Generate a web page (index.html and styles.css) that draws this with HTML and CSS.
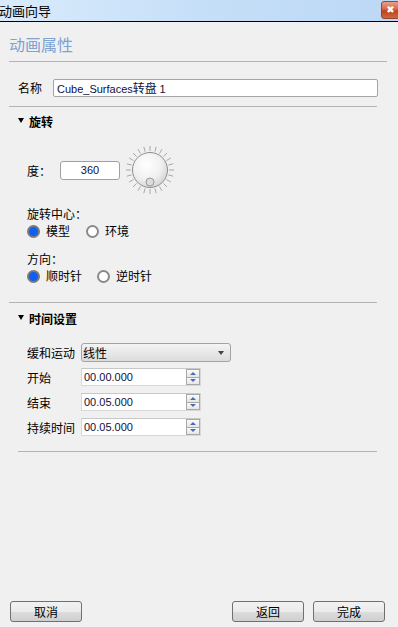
FILE: index.html
```html
<!DOCTYPE html>
<html>
<head>
<meta charset="utf-8">
<link rel="stylesheet" href="styles.css">
</head>
<body>
<div class="window">
  <div class="titlebar">
    <span class="title">动画向导</span>
    <span class="close">✖</span>
  </div>
  <div class="page">
    <div class="heading">动画属性</div>
    <div class="rule rule-wide"></div>

    <div class="name-row">
      <span class="lbl name-lbl">名称</span>
      <div class="textbox name-box"><span class="latin">Cube_Surfaces</span>转盘 <span class="latin">1</span></div>
    </div>
    <div class="rule rule-1"></div>

    <div class="section-title sec-rot"><span class="tri"></span>旋转</div>

    <div class="deg-row">
      <span class="lbl deg-lbl">度：</span>
      <div class="deg-box">360</div>
      <svg class="knob" width="50" height="50" viewBox="0 0 50 50">
        <defs>
          <radialGradient id="kg" cx="0.4" cy="0.35" r="0.7">
            <stop offset="0" stop-color="#ffffff"/>
            <stop offset="0.6" stop-color="#f0f0f0"/>
            <stop offset="1" stop-color="#d2d2d2"/>
          </radialGradient>
        </defs>
        <g stroke="#a8a8a8" stroke-width="1">
          <line x1="25" y1="1" x2="25" y2="6"/>
          <line x1="31.2" y1="1.8" x2="29.9" y2="6.7"/>
          <line x1="37" y1="4.2" x2="34.5" y2="8.5"/>
          <line x1="42" y1="8" x2="38.4" y2="11.6"/>
          <line x1="45.8" y1="13" x2="41.5" y2="15.5"/>
          <line x1="48.2" y1="18.8" x2="43.4" y2="20.1"/>
          <line x1="49" y1="25" x2="44" y2="25"/>
          <line x1="48.2" y1="31.2" x2="43.4" y2="29.9"/>
          <line x1="45.8" y1="37" x2="41.5" y2="34.5"/>
          <line x1="42" y1="42" x2="38.4" y2="38.4"/>
          <line x1="37" y1="45.8" x2="34.5" y2="41.5"/>
          <line x1="31.2" y1="48.2" x2="29.9" y2="43.4"/>
          <line x1="25" y1="49" x2="25" y2="44"/>
          <line x1="18.8" y1="48.2" x2="20.1" y2="43.4"/>
          <line x1="13" y1="45.8" x2="15.5" y2="41.5"/>
          <line x1="8" y1="42" x2="11.6" y2="38.4"/>
          <line x1="4.2" y1="37" x2="8.5" y2="34.5"/>
          <line x1="1.8" y1="31.2" x2="6.7" y2="29.9"/>
          <line x1="1" y1="25" x2="6" y2="25"/>
          <line x1="1.8" y1="18.8" x2="6.7" y2="20.1"/>
          <line x1="4.2" y1="13" x2="8.5" y2="15.5"/>
          <line x1="8" y1="8" x2="11.6" y2="11.6"/>
          <line x1="13" y1="4.2" x2="15.5" y2="8.5"/>
          <line x1="18.8" y1="1.8" x2="20.1" y2="6.7"/>
        </g>
        <circle cx="25" cy="25" r="17.5" fill="url(#kg)" stroke="#8e8e8e" stroke-width="1"/>
        <circle cx="25" cy="37" r="4" fill="#dcdcdc" stroke="#9a9a9a" stroke-width="1"/>
      </svg>
    </div>

    <div class="lbl sub-lbl center-lbl">旋转中心：</div>
    <div class="radio-row">
      <span class="radio checked"></span><span class="rtext">模型</span>
      <span class="radio r-env"></span><span class="rtext">环境</span>
    </div>

    <div class="lbl sub-lbl dir-lbl">方向：</div>
    <div class="radio-row">
      <span class="radio checked"></span><span class="rtext">顺时针</span>
      <span class="radio r-ccw"></span><span class="rtext">逆时针</span>
    </div>

    <div class="rule rule-2"></div>

    <div class="section-title sec-time"><span class="tri"></span>时间设置</div>

    <div class="form-row ease-row">
      <span class="lbl flbl">缓和运动</span>
      <div class="dropdown"><span>线性</span><span class="dd-arrow"></span></div>
    </div>
    <div class="form-row time-row">
      <span class="lbl flbl">开始</span>
      <div class="spinbox"><span class="val">00.00.000</span><span class="spin"><span class="up"></span><span class="down"></span></span></div>
    </div>
    <div class="form-row time-row">
      <span class="lbl flbl">结束</span>
      <div class="spinbox"><span class="val">00.05.000</span><span class="spin"><span class="up"></span><span class="down"></span></span></div>
    </div>
    <div class="form-row time-row">
      <span class="lbl flbl">持续时间</span>
      <div class="spinbox"><span class="val">00.05.000</span><span class="spin"><span class="up"></span><span class="down"></span></span></div>
    </div>
    <div class="rule rule-3"></div>
  </div>

  <div class="footer">
    <button class="btn">取消</button>
    <div class="footer-right">
      <button class="btn">返回</button>
      <button class="btn">完成</button>
    </div>
  </div>
</div>
</body>
</html>
```

FILE: styles.css
```css
* { box-sizing: border-box; }
html, body { margin: 0; padding: 0; }
body {
  background: #f0f0f0;
  font-family: "Liberation Sans", "Noto Sans CJK SC", sans-serif;
  font-size: 12px;
  color: #000;
}
.window {
  width: 398px;
  height: 627px;
  display: flex;
  flex-direction: column;
  overflow: hidden;
}
.titlebar {
  height: 22px;
  flex: none;
  border-bottom: 1px solid #000;
  background: linear-gradient(to right, #d9ebfb 0%, #c6dff8 50%, #bcd8f5 100%);
  display: flex;
  align-items: center;
  justify-content: space-between;
}
.title {
  font-family: "Noto Sans CJK SC", sans-serif;
  font-size: 13px;
  line-height: 21px;
  margin-left: -1px;
  margin-top: -1px;
}
.close {
  width: 19px;
  height: 18px;
  margin-right: -2px;
  margin-top: -1px;
  border: 1px solid #8a4a3a;
  border-radius: 3px;
  background: linear-gradient(to bottom, #e9a08a 0%, #d8664a 45%, #c2401f 55%, #d2643c 100%);
  color: #fff;
  font-size: 10px;
  line-height: 16px;
  text-align: center;
  font-family: "DejaVu Sans", sans-serif;
  font-weight: bold;
}
.page {
  padding: 0 0 0 9px;
  display: flex;
  flex-direction: column;
}
.heading {
  margin-top: 12px;
  font-family: "Noto Sans CJK SC", sans-serif;
  font-size: 16px;
  line-height: 20px;
  color: #7ea2d2;
  height: 20px;
}
.rule {
  height: 1px;
  background: #b4b4b4;
}
.rule-wide { width: 378px; margin-top: 7px; }
.lbl {
  font-family: "Noto Sans CJK SC", sans-serif;
  font-size: 12px;
}
.name-row {
  margin-top: 17px;
  height: 18px;
  display: flex;
  align-items: center;
  padding-left: 9px;
}
.name-lbl { width: 35px; line-height: 18px; }
.textbox {
  height: 18px;
  background: #fff;
  border: 1px solid #a5a5a5;
  border-radius: 2px;
  line-height: 16px;
  padding-left: 3px;
  font-size: 12px;
}
.name-box {
  width: 325px;
  font-family: "Noto Sans CJK SC", sans-serif;
  color: #101040;
  white-space: nowrap;
}
.latin {
  font-family: "Liberation Sans", sans-serif;
  font-size: 11px;
}
.rule-1 { width: 368px; margin-top: 9px; }
.section-title {
  font-family: "Noto Sans CJK SC", sans-serif;
  font-weight: bold;
  font-size: 12px;
  line-height: 16px;
  height: 16px;
  padding-left: 9px;
  display: flex;
  align-items: center;
}
.sec-rot { margin-top: 7px; }
.tri {
  width: 0;
  height: 0;
  border-left: 3.5px solid transparent;
  border-right: 3.5px solid transparent;
  border-top: 5px solid #000;
  margin-right: 5px;
  margin-top: -3px;
}
.deg-row {
  margin-top: 15px;
  height: 50px;
  display: flex;
  align-items: center;
  padding-left: 18px;
}
.deg-lbl { width: 33px; }
.deg-box {
  width: 60px;
  height: 19px;
  background: #fff;
  border: 1px solid #a0a0a0;
  border-radius: 3px;
  text-align: center;
  line-height: 17px;
  color: #101040;
  font-size: 11px;
}
.knob { margin-left: 5px; display: block; }
.sub-lbl {
  padding-left: 18px;
  line-height: 14px;
  height: 14px;
}
.center-lbl { margin-top: 12px; }
.dir-lbl { margin-top: 14px; }
.radio-row {
  margin-top: 3px;
  height: 14px;
  display: flex;
  align-items: center;
  padding-left: 18px;
}
.radio {
  width: 13px;
  height: 13px;
  border-radius: 50%;
  border: 2px solid #8a8a8a;
  background: #fff;
  flex: none;
}
.radio.checked {
  background: #0f5ff0;
  border-color: #7a7a7a;
}
.rtext {
  font-family: "Noto Sans CJK SC", sans-serif;
  margin-left: 6px;
  line-height: 14px;
}
.r-env { margin-left: 16px; }
.r-ccw { margin-left: 15px; }
.rule-2 { width: 368px; margin-top: 19px; }
.sec-time { margin-top: 8px; }
.form-row {
  display: flex;
  align-items: center;
  padding-left: 18px;
}
.flbl { width: 54px; }
.ease-row { margin-top: 16px; height: 19px; }
.dropdown {
  width: 150px;
  height: 19px;
  border: 1px solid #a2a2a2;
  border-radius: 3px;
  background: linear-gradient(to bottom, #f4f4f4 0%, #e8e8e8 50%, #dcdcdc 100%);
  display: flex;
  align-items: center;
  justify-content: space-between;
  padding: 0 6px 0 1px;
  font-family: "Noto Sans CJK SC", sans-serif;
  line-height: 17px;
}
.dd-arrow {
  width: 0;
  height: 0;
  border-left: 3.5px solid transparent;
  border-right: 3.5px solid transparent;
  border-top: 4px solid #444;
}
.time-row { height: 18px; margin-top: 6px; }
.time-row + .time-row { margin-top: 7px; }
.spinbox {
  width: 120px;
  height: 18px;
  background: #fff;
  border: 1px solid #d8d8d8;
  border-top-color: #c8c8c8;
  display: flex;
  align-items: center;
  justify-content: space-between;
  padding-left: 2px;
}
.val {
  font-size: 11px;
  color: #101040;
  line-height: 16px;
}
.spin {
  width: 14px;
  height: 16px;
  display: flex;
  flex-direction: column;
}
.spin .up, .spin .down {
  flex: 1;
  border: 1px solid #a8a8a8;
  background: linear-gradient(to bottom, #fafafa, #e6e6e6);
  display: flex;
  align-items: center;
  justify-content: center;
}
.spin .down { border-top: none; }
.spin .up::after {
  content: "";
  border-left: 3px solid transparent;
  border-right: 3px solid transparent;
  border-bottom: 3px solid #4a6ab8;
}
.spin .down::after {
  content: "";
  border-left: 3px solid transparent;
  border-right: 3px solid transparent;
  border-top: 3px solid #4a6ab8;
}
.rule-3 { width: 359px; margin-left: 9px; margin-top: 15px; }
.footer {
  margin-top: auto;
  padding: 0 13px 5px 10px;
  display: flex;
  justify-content: space-between;
  align-items: flex-end;
}
.footer-right { display: flex; gap: 9px; }
.btn {
  width: 72px;
  height: 21px;
  margin: 0;
  padding: 0;
  border: 1px solid #707070;
  border-radius: 3px;
  background: linear-gradient(to bottom, #f2f2f2 0%, #ebebeb 50%, #dddddd 51%, #cfcfcf 100%);
  font-family: "Noto Sans CJK SC", sans-serif;
  font-size: 12px;
  line-height: 19px;
  color: #000;
}
```
